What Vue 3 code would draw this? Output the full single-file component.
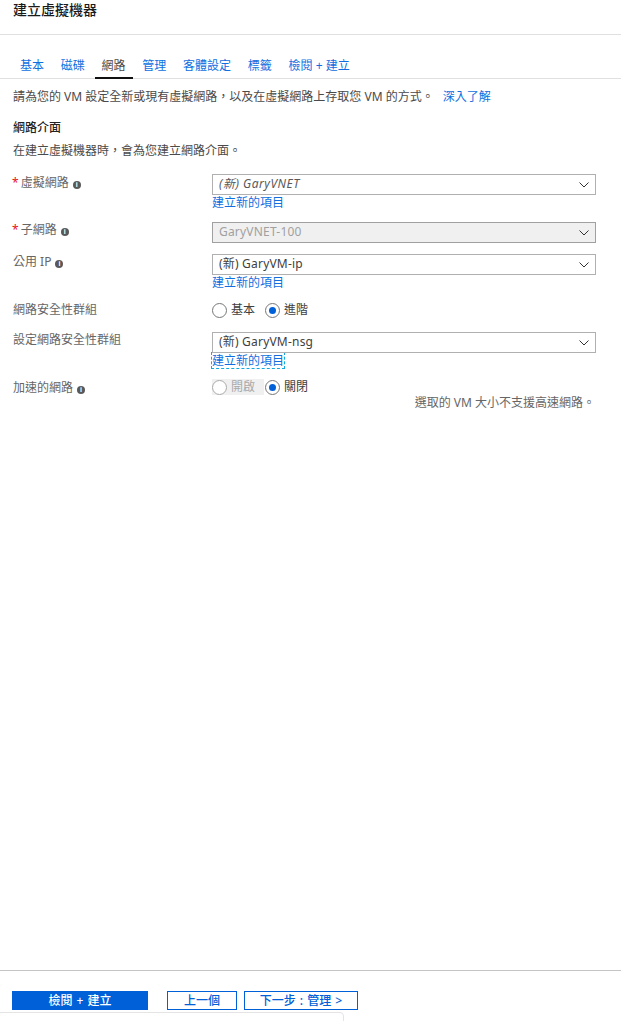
<template>
  <div class="page">
    <header class="title-bar">
      <h1>建立虛擬機器</h1>
    </header>

    <nav class="tabs">
      <a v-for="tab in tabs" :key="tab" class="tab" :class="{ active: tab === '網路' }">{{ tab }}</a>
    </nav>

    <main class="content">
      <p class="intro">
        請為您的 VM 設定全新或現有虛擬網路，以及在虛擬網路上存取您 VM 的方式。
        <a class="link learn">深入了解</a>
      </p>
      <h2>網路介面</h2>
      <p class="sub">在建立虛擬機器時，會為您建立網路介面。</p>

      <div class="form">
        <div class="row r-vnet">
          <label><span class="req">*</span>虛擬網路<i class="info">i</i></label>
          <div class="field">
            <div class="select italic">(新) GaryVNET<svg class="chev" viewBox="0 0 10 6"><path d="M.5.5 5 5 9.5.5" /></svg></div>
            <a class="link new">建立新的項目</a>
          </div>
        </div>
        <div class="row r-subnet">
          <label><span class="req">*</span>子網路<i class="info">i</i></label>
          <div class="field">
            <div class="select disabled">GaryVNET-100<svg class="chev" viewBox="0 0 10 6"><path d="M.5.5 5 5 9.5.5" /></svg></div>
          </div>
        </div>
        <div class="row r-ip">
          <label>公用 IP<i class="info">i</i></label>
          <div class="field">
            <div class="select">(新) GaryVM-ip<svg class="chev" viewBox="0 0 10 6"><path d="M.5.5 5 5 9.5.5" /></svg></div>
            <a class="link new">建立新的項目</a>
          </div>
        </div>
        <div class="row r-nsg">
          <label>網路安全性群組</label>
          <div class="field radios">
            <span class="radio"><b class="dot"></b>基本</span>
            <span class="radio on"><b class="dot"></b>進階</span>
          </div>
        </div>
        <div class="row r-conf">
          <label>設定網路安全性群組</label>
          <div class="field">
            <div class="select">(新) GaryVM-nsg<svg class="chev" viewBox="0 0 10 6"><path d="M.5.5 5 5 9.5.5" /></svg></div>
            <a class="link new focused">建立新的項目</a>
          </div>
        </div>
        <div class="row r-accel">
          <label>加速的網路<i class="info">i</i></label>
          <div class="field">
            <div class="radios">
              <span class="radio off"><b class="dot"></b>開啟</span>
              <span class="radio on"><b class="dot"></b>關閉</span>
            </div>
            <p class="note">選取的 VM 大小不支援高速網路。</p>
          </div>
        </div>
      </div>
    </main>

    <footer class="actions">
      <button class="btn primary">檢閱 + 建立</button>
      <button class="btn prev">上一個</button>
      <button class="btn next">下一步 : 管理 &gt;</button>
    </footer>
    <div class="peek"></div>
  </div>
</template>

<script setup>
const tabs = ["基本", "磁碟", "網路", "管理", "客體設定", "標籤", "檢閱 + 建立"];
</script>

<style>
html,
body {
  margin: 0;
  background: #fff;
  overflow: hidden;
}
</style>

<style scoped>
.page {
  position: relative;
  width: 621px;
  height: 1021px;
  overflow: hidden;
  display: flex;
  flex-direction: column;
  font-family: "Noto Sans", "Noto Sans CJK TC", sans-serif;
  font-size: 12px;
  line-height: 16px;
  color: #4a4a4a;
}

.title-bar {
  height: 34px;
  border-bottom: 1px solid #e0e0e0;
  padding-left: 13px;
}

h1 {
  margin: 0;
  padding-top: 1px;
  font-size: 14px;
  line-height: 18px;
  font-weight: 500;
  color: #1a1a1a;
}

.tabs {
  display: flex;
  gap: 2.75px;
  margin-top: 20px;
  padding-left: 13px;
  height: 23px;
  border-bottom: 1px solid #e0e0e0;
}

.tab {
  padding: 3px 7px 0;
  height: 20px;
  color: #0f6fe0;
  white-space: nowrap;
}

.tab.active {
  color: #4a4a4a;
  border-bottom: 2px solid #111;
  height: 19px;
  margin-bottom: -1px;
}

.content {
  flex: 1;
  padding: 0 25px 0 13px;
}

.intro {
  margin: 10px 0 0;
  white-space: nowrap;
}

.link {
  color: #0f6fe0;
}

.learn {
  margin-left: 6px;
}

h2 {
  margin: 15px 0 0;
  font-size: 12px;
  line-height: 16px;
  font-weight: 500;
  color: #222;
}

.sub {
  margin: 7px 0 0;
}

.form {
  margin-top: 15px;
}

.row {
  display: flex;
}

.row > label {
  width: 199px;
  flex: none;
  color: #666;
}

.r-vnet > label,
.r-accel > label {
  padding-top: 1px;
}

.field {
  flex: 1;
  min-width: 0;
}

.r-subnet {
  margin-top: 12px;
}

.r-ip {
  margin-top: 11px;
}

.r-nsg {
  margin-top: 12px;
}

.r-conf {
  margin-top: 14px;
}

.r-accel {
  margin-top: 11px;
}

.req {
  color: #e81123;
  margin-left: -1px;
  margin-right: 2px;
}

.info {
  display: inline-block;
  width: 8px;
  height: 8px;
  margin-left: 4px;
  border-radius: 50%;
  background: #595959;
  color: #fff;
  font: bold 7px/8px "Liberation Sans", sans-serif;
  text-align: center;
  vertical-align: 0.5px;
}

.select {
  position: relative;
  box-sizing: border-box;
  height: 21px;
  border: 1px solid #b0b0b0;
  padding: 0 0 0 6px;
  line-height: 17px;
  letter-spacing: 0.2px;
  color: #404040;
}

.select.italic {
  font-style: italic;
  letter-spacing: 0.5px;
  color: #595959;
}

.select.disabled {
  background: #f0f0f0;
  color: #a0a0a0;
  border-color: #a0a0a0;
}

.chev {
  position: absolute;
  right: 6px;
  top: 7px;
  width: 10px;
  height: 6px;
  fill: none;
  stroke: #333;
  stroke-width: 1;
}

.new {
  display: block;
  width: fit-content;
  line-height: 16px;
  height: 15px;
}

.focused {
  outline: 1px dashed #12a8e0;
}

.radios {
  display: flex;
  gap: 10px;
  height: 16px;
}

.radio {
  display: inline-flex;
  align-items: center;
  gap: 4px;
  color: #404040;
}

.dot {
  box-sizing: border-box;
  width: 15px;
  height: 15px;
  border: 1px solid #777;
  border-radius: 50%;
  background: #fff;
  position: relative;
}

.on .dot::after {
  content: "";
  position: absolute;
  left: 3px;
  top: 3px;
  width: 7px;
  height: 7px;
  border-radius: 50%;
  background: #0060d8;
}

.off {
  background: #f0f0f0;
  color: #aaa;
  padding-right: 9px;
  margin-right: -9px;
}

.off .dot {
  border-color: #aaa;
}

.note {
  margin: 0;
  padding-right: 1px;
  text-align: right;
  color: #666;
}

.actions {
  height: 30px;
  border-top: 1px solid #c4c4c4;
  display: flex;
  align-items: flex-start;
  padding: 20px 0 0 12px;
}

.btn {
  box-sizing: border-box;
  height: 19px;
  padding: 0;
  border: 1px solid #0060d8;
  background: #fff;
  color: #0060d8;
  font: 500 12px/16px "Noto Sans", "Noto Sans CJK TC", sans-serif;
  word-spacing: 1px;
}

.primary {
  width: 136px;
  background: #0060d8;
  color: #fff;
  margin-right: 19px;
}

.prev {
  width: 70px;
  margin-right: 7px;
}

.next {
  width: 114px;
}

.peek {
  position: absolute;
  left: -8px;
  width: 352px;
  top: 1012px;
  height: 30px;
  box-sizing: border-box;
  border: 1px solid #e4e4e4;
  border-radius: 4px;
}
</style>
